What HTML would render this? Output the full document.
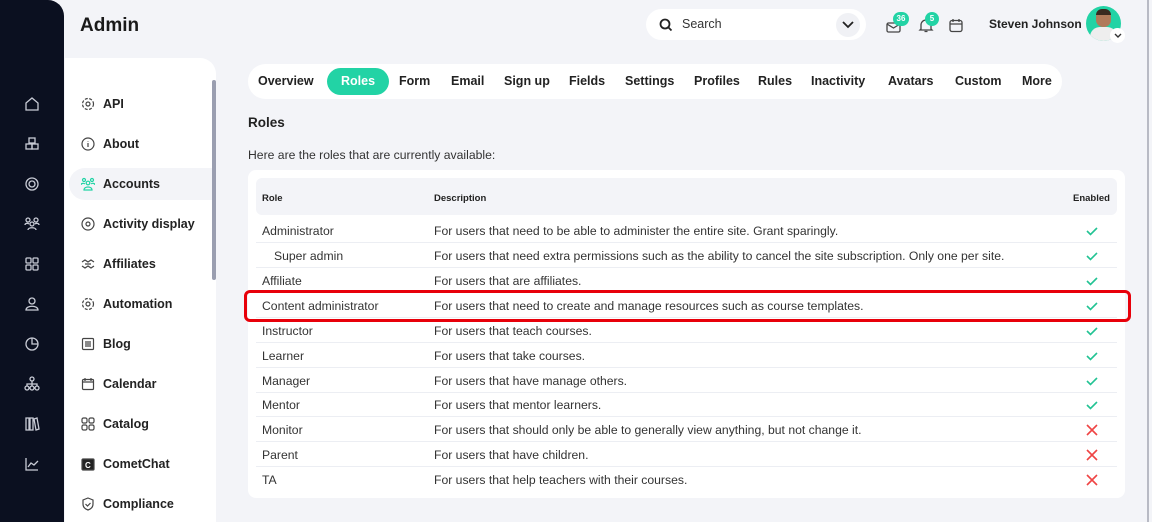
<!DOCTYPE html>
<html><head><meta charset="utf-8"><style>
*{box-sizing:border-box;margin:0;padding:0}
html,body{width:1152px;height:522px;overflow:hidden}
body{background:#f3f4f8;font-family:"Liberation Sans",sans-serif;color:#222;position:relative}
.side{position:absolute;left:0;top:0;width:64px;height:522px;background:#0b1020;border-top-right-radius:16px}
.side svg{position:absolute;left:24px;width:16px;height:16px;fill:none;stroke:#c9ccd6;stroke-width:1.3}
.title{position:absolute;left:80px;top:15px;font-size:19px;font-weight:bold;color:#1a1a1a}
.sub{position:absolute;left:65px;top:58px;width:151px;height:464px;background:#fff;border-top-right-radius:16px}
.sub .it{position:absolute;left:16px;font-size:12.5px;font-weight:bold;color:#222;height:32px;line-height:32px;padding-left:22px;width:130px}
.sub .it svg{position:absolute;left:0;top:9px;width:14px;height:14px;fill:none;stroke:#444;stroke-width:1.2}
.sub .act{background:#f3f4f8;border-radius:16px 0 0 16px;left:4px;padding-left:34px;width:147px}
.sub .act svg{left:12px;stroke:#22d3a5}
.scroll{position:absolute;left:212px;top:80px;width:4px;height:200px;background:#9a9eb0;border-radius:2px}
.search{position:absolute;left:646px;top:9px;width:220px;height:31px;background:#fff;border-radius:16px}
.search span{position:absolute;left:36px;top:8px;font-size:12.5px;color:#333}
.tabs{position:absolute;left:248px;top:64px;width:814px;height:35px;background:#fff;border-radius:18px;font-size:12.5px;font-weight:bold}
.tabs span{position:absolute;top:10px}
.tabs .on{background:#22d3a5;color:#fff;border-radius:14px;top:4px;height:27px;line-height:27px;padding:0 14px}
h2{position:absolute;left:248px;top:115px;font-size:13.5px;font-weight:bold}
.desc{position:absolute;left:248px;top:148px;font-size:12.2px;color:#333}
.card{position:absolute;left:248px;top:170px;width:877px;height:328px;background:#fff;border-radius:8px}
.hd{position:absolute;left:8px;top:8px;width:861px;height:37px;background:#f3f4f8;border-radius:6px;font-size:9.5px;font-weight:bold}
.hd span{position:absolute;top:15px}
.row{position:absolute;left:8px;width:861px;height:25px;border-bottom:1px solid #eceef3;font-size:12.2px;color:#333}
.row span{position:absolute;top:6px}
.row svg{position:absolute;left:830px;top:7px;width:12px;height:12px;fill:none;stroke-width:1.6}
.red{position:absolute;left:244px;top:290px;width:887px;height:32px;border:3.5px solid #e8000a;border-radius:6px}
.badge{position:absolute;background:#22d3a5;color:#fff;font-size:8px;font-weight:bold;border-radius:8px;height:14px;line-height:14px;text-align:center}
</style></head><body>
<div class="side">
<svg style="top:96px" viewBox="0 0 16 16"><path d="M2 7L8 2l6 5v7H2z"/></svg>
<svg style="top:136px" viewBox="0 0 16 16"><rect x="5" y="2" width="6" height="5"/><rect x="2" y="8" width="6" height="5"/><rect x="8" y="8" width="6" height="5"/></svg>
<svg style="top:176px" viewBox="0 0 16 16"><circle cx="8" cy="8" r="6"/><circle cx="8" cy="8" r="3"/></svg>
<svg style="top:216px" viewBox="0 0 16 16"><circle cx="4" cy="4" r="2"/><circle cx="12" cy="4" r="2"/><circle cx="8" cy="8" r="2"/><path d="M4 14c0-3 8-3 8 0M1 9c0-2 3-2 4-1M15 9c0-2-3-2-4-1"/></svg>
<svg style="top:256px" viewBox="0 0 16 16"><rect x="2" y="2" width="5" height="5" rx="1"/><rect x="9" y="2" width="5" height="5" rx="1"/><rect x="2" y="9" width="5" height="5" rx="1"/><rect x="9" y="9" width="5" height="5" rx="1"/></svg>
<svg style="top:296px" viewBox="0 0 16 16"><circle cx="8" cy="5" r="3"/><path d="M2 14c0-5 12-5 12 0z"/></svg>
<svg style="top:336px" viewBox="0 0 16 16"><circle cx="8" cy="8" r="6"/><path d="M8 2v6h6"/></svg>
<svg style="top:376px" viewBox="0 0 16 16"><circle cx="8" cy="3" r="2"/><circle cx="3" cy="12" r="2"/><circle cx="8" cy="12" r="2"/><circle cx="13" cy="12" r="2"/><path d="M8 5v5M3 10V8h10v2"/></svg>
<svg style="top:416px" viewBox="0 0 16 16"><path d="M2 2h3v12H2zM6 2h3v12H6zM10 3l3-1 2 11-3 1z"/></svg>
<svg style="top:456px" viewBox="0 0 16 16"><path d="M2 2v12h12M4 11l3-4 3 2 4-4"/></svg>
</div>
<div class="title">Admin</div>
<div class="sub">
<div class="it" style="top:30px"><svg viewBox="0 0 14 14"><circle cx="7" cy="7" r="2"/><circle cx="7" cy="7" r="5.5" stroke-dasharray="3 1.5"/></svg>API</div>
<div class="it" style="top:70px"><svg viewBox="0 0 14 14"><circle cx="7" cy="7" r="6"/><path d="M7 6v4M7 4v.5"/></svg>About</div>
<div class="it act" style="top:110px"><svg viewBox="0 0 14 14"><circle cx="3" cy="3" r="1.5"/><circle cx="11" cy="3" r="1.5"/><circle cx="7" cy="6" r="1.8"/><path d="M3 13c0-4 8-4 8 0zM0 8c0-2 3-2 4-1M14 8c0-2-3-2-4-1"/></svg>Accounts</div>
<div class="it" style="top:150px"><svg viewBox="0 0 14 14"><circle cx="7" cy="7" r="6"/><circle cx="7" cy="7" r="2"/></svg>Activity display</div>
<div class="it" style="top:190px"><svg viewBox="0 0 14 14"><path d="M1 5l3-2 3 2 3-2 3 2M1 9l3 2 3-2 3 2 3-2M4 7h6"/></svg>Affiliates</div>
<div class="it" style="top:230px"><svg viewBox="0 0 14 14"><circle cx="7" cy="7" r="2"/><circle cx="7" cy="7" r="5.5" stroke-dasharray="3 1.5"/></svg>Automation</div>
<div class="it" style="top:270px"><svg viewBox="0 0 14 14"><rect x="1.5" y="1.5" width="11" height="11" rx="1"/><path d="M4 5h6M4 7h6M4 9h6"/></svg>Blog</div>
<div class="it" style="top:310px"><svg viewBox="0 0 14 14"><rect x="1.5" y="2.5" width="11" height="10" rx="1"/><path d="M1.5 5h11M4 1v3M10 1v3"/></svg>Calendar</div>
<div class="it" style="top:350px"><svg viewBox="0 0 14 14"><rect x="1" y="1" width="5" height="5" rx="1.5"/><rect x="8" y="1" width="5" height="5" rx="1.5"/><rect x="1" y="8" width="5" height="5" rx="1.5"/><rect x="8" y="8" width="5" height="5" rx="1.5"/></svg>Catalog</div>
<div class="it" style="top:390px"><svg viewBox="0 0 14 14"><rect x="1" y="2" width="12" height="11" rx="1" fill="#222"/><text x="4" y="11" font-size="8" fill="#fff" stroke="none" font-weight="bold" font-family="Liberation Sans">C</text></svg>CometChat</div>
<div class="it" style="top:430px"><svg viewBox="0 0 14 14"><path d="M7 1l5 2v4c0 3-2 5-5 6-3-1-5-3-5-6V3z"/><path d="M4.5 7l2 2 3-3"/></svg>Compliance</div>
</div>
<div class="scroll"></div>
<div class="search"><svg style="position:absolute;left:13px;top:9px" width="14" height="14" viewBox="0 0 14 14" fill="none" stroke="#222" stroke-width="1.8"><circle cx="6" cy="6" r="4.5"/><path d="M9.5 9.5l3 3"/></svg><span>Search</span>
<div style="position:absolute;right:6px;top:4px;width:24px;height:24px;border-radius:12px;background:#f0f1f5"><svg style="position:absolute;left:6px;top:8px" width="12" height="8" viewBox="0 0 12 8" fill="none" stroke="#222" stroke-width="1.8"><path d="M1 1l5 5 5-5"/></svg></div></div>
<svg style="position:absolute;left:886px;top:18px" width="16" height="16" viewBox="0 0 16 16" fill="none" stroke="#444" stroke-width="1.3"><rect x="1" y="5" width="13" height="9" rx="1.5"/><path d="M1 6l6.5 4L14 6"/></svg>
<div class="badge" style="left:893px;top:12px;width:16px">36</div>
<svg style="position:absolute;left:918px;top:17px" width="16" height="16" viewBox="0 0 16 16" fill="none" stroke="#444" stroke-width="1.3"><path d="M3 12V8a5 5 0 0110 0v4l1 1H2zM6.5 14.5h3"/></svg>
<div class="badge" style="left:925px;top:12px;width:14px">5</div>
<svg style="position:absolute;left:949px;top:18px" width="14" height="15" viewBox="0 0 14 15" fill="none" stroke="#444" stroke-width="1.3"><rect x="1" y="2.5" width="12" height="11" rx="2"/><path d="M1 6h12M4 1v3M10 1v3"/></svg>
<div style="position:absolute;left:989px;top:17px;font-size:12px;font-weight:bold">Steven Johnson</div>
<div style="position:absolute;left:1086px;top:6px;width:35px;height:35px;border-radius:50%;background:#22d3a5;overflow:hidden"><div style="position:absolute;left:10px;top:4px;width:15px;height:17px;border-radius:7px;background:#b07a5a"></div><div style="position:absolute;left:10px;top:3px;width:15px;height:6px;border-radius:6px 6px 0 0;background:#3a2a20"></div><div style="position:absolute;left:4px;top:21px;width:27px;height:20px;border-radius:10px 10px 0 0;background:#eee"></div></div>
<div style="position:absolute;left:1110px;top:28px;width:15px;height:15px;border-radius:50%;background:#fff"><svg style="position:absolute;left:4px;top:5px" width="8" height="6" viewBox="0 0 8 6" fill="none" stroke="#333" stroke-width="1.4"><path d="M1 1l3 3 3-3"/></svg></div>
<div style="position:absolute;left:1147px;top:0;width:2px;height:522px;background:#b8bac4"></div>
<div class="tabs">
<span style="left:10px">Overview</span><span class="on" style="left:79px">Roles</span><span style="left:151px">Form</span><span style="left:203px">Email</span><span style="left:256px">Sign up</span><span style="left:321px">Fields</span><span style="left:377px">Settings</span><span style="left:446px">Profiles</span><span style="left:510px">Rules</span><span style="left:563px">Inactivity</span><span style="left:640px">Avatars</span><span style="left:707px">Custom</span><span style="left:774px">More</span>
</div>
<h2>Roles</h2>
<div class="desc">Here are the roles that are currently available:</div>
<div class="card">
<div class="hd"><span style="left:6px">Role</span><span style="left:178px">Description</span><span style="left:817px">Enabled</span></div>
<div class="row" style="top:48px"><span style="left:6px">Administrator</span><span style="left:178px">For users that need to be able to administer the entire site. Grant sparingly.</span><svg viewBox="0 0 12 12" stroke="#22c393"><path d="M1 6l3.5 3.5L11 3"/></svg></div>
<div class="row" style="top:73px"><span style="left:18px">Super admin</span><span style="left:178px">For users that need extra permissions such as the ability to cancel the site subscription. Only one per site.</span><svg viewBox="0 0 12 12" stroke="#22c393"><path d="M1 6l3.5 3.5L11 3"/></svg></div>
<div class="row" style="top:98px"><span style="left:6px">Affiliate</span><span style="left:178px">For users that are affiliates.</span><svg viewBox="0 0 12 12" stroke="#22c393"><path d="M1 6l3.5 3.5L11 3"/></svg></div>
<div class="row" style="top:123px"><span style="left:6px">Content administrator</span><span style="left:178px">For users that need to create and manage resources such as course templates.</span><svg viewBox="0 0 12 12" stroke="#22c393"><path d="M1 6l3.5 3.5L11 3"/></svg></div>
<div class="row" style="top:148px"><span style="left:6px">Instructor</span><span style="left:178px">For users that teach courses.</span><svg viewBox="0 0 12 12" stroke="#22c393"><path d="M1 6l3.5 3.5L11 3"/></svg></div>
<div class="row" style="top:173px"><span style="left:6px">Learner</span><span style="left:178px">For users that take courses.</span><svg viewBox="0 0 12 12" stroke="#22c393"><path d="M1 6l3.5 3.5L11 3"/></svg></div>
<div class="row" style="top:198px"><span style="left:6px">Manager</span><span style="left:178px">For users that have manage others.</span><svg viewBox="0 0 12 12" stroke="#22c393"><path d="M1 6l3.5 3.5L11 3"/></svg></div>
<div class="row" style="top:222px"><span style="left:6px">Mentor</span><span style="left:178px">For users that mentor learners.</span><svg viewBox="0 0 12 12" stroke="#22c393"><path d="M1 6l3.5 3.5L11 3"/></svg></div>
<div class="row" style="top:247px"><span style="left:6px">Monitor</span><span style="left:178px">For users that should only be able to generally view anything, but not change it.</span><svg viewBox="0 0 12 12" stroke="#ef4444"><path d="M1 1l10 10M11 1L1 11"/></svg></div>
<div class="row" style="top:272px"><span style="left:6px">Parent</span><span style="left:178px">For users that have children.</span><svg viewBox="0 0 12 12" stroke="#ef4444"><path d="M1 1l10 10M11 1L1 11"/></svg></div>
<div class="row" style="top:297px;border:none"><span style="left:6px">TA</span><span style="left:178px">For users that help teachers with their courses.</span><svg viewBox="0 0 12 12" stroke="#ef4444"><path d="M1 1l10 10M11 1L1 11"/></svg></div>
</div>
<div class="red"></div>
</body></html>
